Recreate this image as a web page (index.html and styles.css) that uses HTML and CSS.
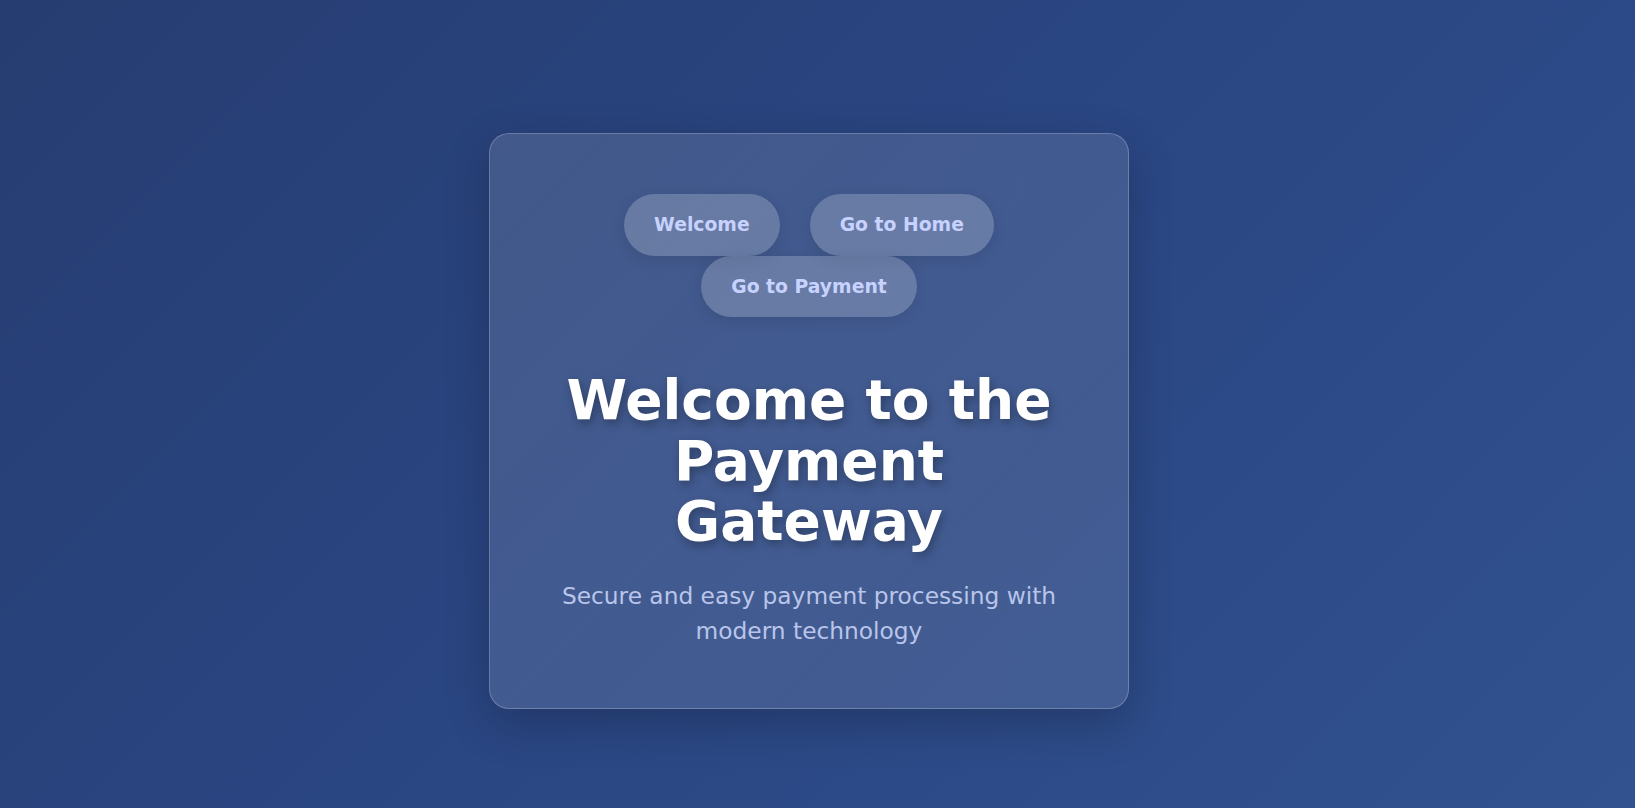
FILE: index.html
```html
<!DOCTYPE html>
<html lang="en">
<head>
<meta charset="utf-8">
<title>Payment Gateway</title>
<link rel="stylesheet" href="styles.css">
</head>
<body>
<main class="page">
  <section class="card">
    <nav class="nav">
      <a class="nav-btn" href="#">Welcome</a>
      <a class="nav-btn" href="#">Go to Home</a>
      <a class="nav-btn" href="#">Go to Payment</a>
    </nav>
    <h1 class="title">Welcome to the Payment Gateway</h1>
    <p class="subtitle">Secure and easy payment processing with modern technology</p>
  </section>
</main>
</body>
</html>
```
FILE: styles.css
```css
html, body {
  margin: 0;
  padding: 0;
}

body {
  font-family: "DejaVu Sans", "Open Sans", sans-serif;
  background: linear-gradient(135deg, #263d71 0%, #2a4683 50%, #31518f 100%);
  min-height: 100vh;
}

.page {
  box-sizing: border-box;
  min-height: 100vh;
  display: flex;
  align-items: center;
  justify-content: center;
  padding: 34px 17px 0 0;
}

.card {
  box-sizing: border-box;
  width: 640px;
  padding: 60px 50px 60px;
  border-radius: 20px;
  background: linear-gradient(135deg, rgba(255,255,255,0.12), rgba(255,255,255,0.1));
  border: 1px solid rgba(255,255,255,0.22);
  box-shadow: 0 15px 45px rgba(0,0,0,0.22);
  text-align: center;
}

.nav {
  display: flex;
  flex-wrap: wrap;
  justify-content: center;
}

.nav-btn {
  display: inline-block;
  margin: 0 15px;
  padding: 17px 30px;
  line-height: 27.5px;
  font-size: 18.8px;
  font-weight: 700;
  color: #c7d2fe;
  text-decoration: none;
  background: rgba(255,255,255,0.2);
  border-radius: 999px;
  box-shadow: 0 4px 15px rgba(0,0,0,0.1);
}

.title {
  margin: 53px 0 0;
  font-size: 55px;
  line-height: 60.5px;
  font-weight: 700;
  color: #ffffff;
  text-shadow: 2px 4px 10px rgba(0,0,0,0.3);
}

.subtitle {
  margin: 27.5px 0 0;
  font-size: 23.3px;
  line-height: 34.5px;
  color: #b9c5ea;
}
```
